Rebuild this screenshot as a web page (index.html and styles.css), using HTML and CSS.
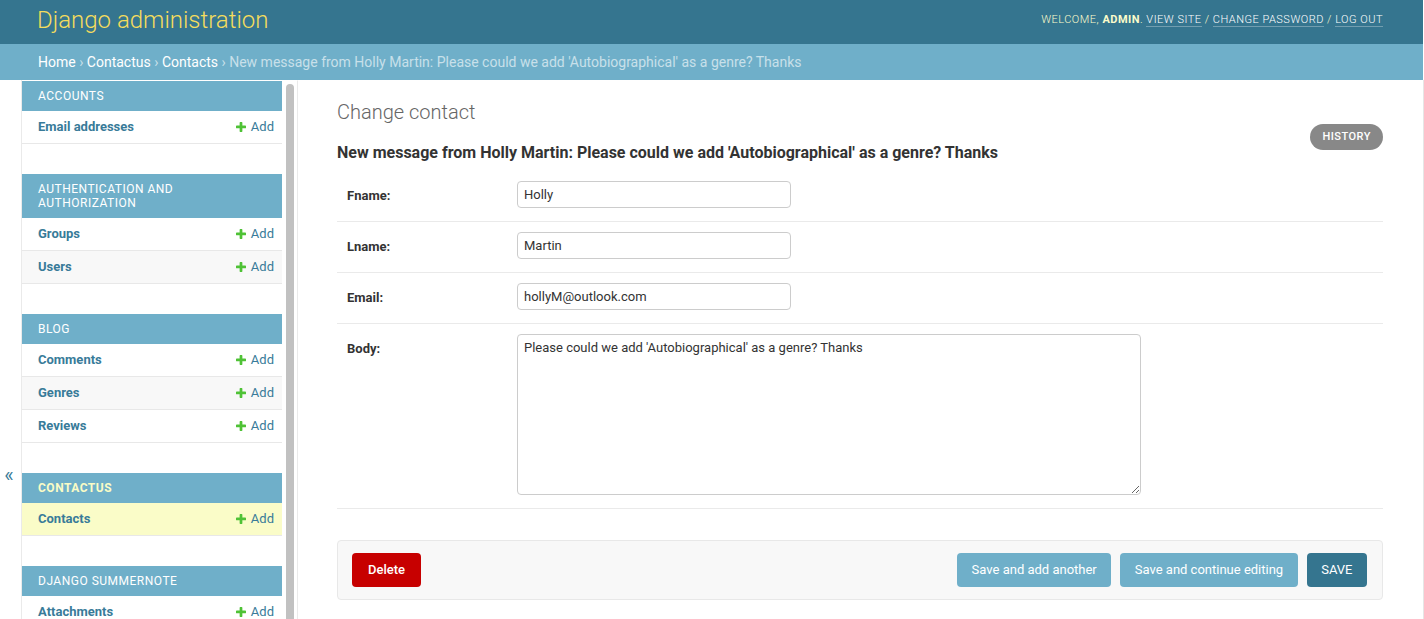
FILE: index.html
```html
<!DOCTYPE html>
<html lang="en">
<head>
<meta charset="utf-8">
<title>Change contact | Django site admin</title>
<link rel="stylesheet" href="styles.css">
</head>
<body>
<header class="header">
  <h1 class="site-name"><a href="#">Django administration</a></h1>
  <div class="user-tools">Welcome, <strong>admin</strong>. <a href="#">View site</a> / <a href="#">Change password</a> / <a href="#">Log out</a></div>
</header>
<nav class="breadcrumbs"><a href="#">Home</a> › <a href="#">Contactus</a> › <a href="#">Contacts</a> › New message from Holly Martin: Please could we add 'Autobiographical' as a genre? Thanks</nav>
<div class="main">
  <button class="toggle-nav" type="button">«</button>
  <nav class="nav-sidebar">
    <div class="sidebar-list">
      <div class="module">
        <div class="caption">Accounts</div>
        <div class="row"><a class="model" href="#">Email addresses</a><a class="addlink" href="#"><svg class="plus" viewBox="192 192 1408 1408" width="10" height="10"><path d="M1600 796v192q0 40-28 68t-68 28h-416v416q0 40-28 68t-68 28h-192q-40 0-68-28t-28-68v-416h-416q-40 0-68-28t-28-68v-192q0-40 28-68t68-28h416v-416q0-40 28-68t68-28h192q40 0 68 28t28 68v416h416q40 0 68 28t28 68z"/></svg>Add</a></div>
      </div>
      <div class="module">
        <div class="caption">Authentication and Authorization</div>
        <div class="row"><a class="model" href="#">Groups</a><a class="addlink" href="#"><svg class="plus" viewBox="192 192 1408 1408" width="10" height="10"><path d="M1600 796v192q0 40-28 68t-68 28h-416v416q0 40-28 68t-68 28h-192q-40 0-68-28t-28-68v-416h-416q-40 0-68-28t-28-68v-192q0-40 28-68t68-28h416v-416q0-40 28-68t68-28h192q40 0 68 28t28 68v416h416q40 0 68 28t28 68z"/></svg>Add</a></div>
        <div class="row alt"><a class="model" href="#">Users</a><a class="addlink" href="#"><svg class="plus" viewBox="192 192 1408 1408" width="10" height="10"><path d="M1600 796v192q0 40-28 68t-68 28h-416v416q0 40-28 68t-68 28h-192q-40 0-68-28t-28-68v-416h-416q-40 0-68-28t-28-68v-192q0-40 28-68t68-28h416v-416q0-40 28-68t68-28h192q40 0 68 28t28 68v416h416q40 0 68 28t28 68z"/></svg>Add</a></div>
      </div>
      <div class="module">
        <div class="caption">Blog</div>
        <div class="row"><a class="model" href="#">Comments</a><a class="addlink" href="#"><svg class="plus" viewBox="192 192 1408 1408" width="10" height="10"><path d="M1600 796v192q0 40-28 68t-68 28h-416v416q0 40-28 68t-68 28h-192q-40 0-68-28t-28-68v-416h-416q-40 0-68-28t-28-68v-192q0-40 28-68t68-28h416v-416q0-40 28-68t68-28h192q40 0 68 28t28 68v416h416q40 0 68 28t28 68z"/></svg>Add</a></div>
        <div class="row alt"><a class="model" href="#">Genres</a><a class="addlink" href="#"><svg class="plus" viewBox="192 192 1408 1408" width="10" height="10"><path d="M1600 796v192q0 40-28 68t-68 28h-416v416q0 40-28 68t-68 28h-192q-40 0-68-28t-28-68v-416h-416q-40 0-68-28t-28-68v-192q0-40 28-68t68-28h416v-416q0-40 28-68t68-28h192q40 0 68 28t28 68v416h416q40 0 68 28t28 68z"/></svg>Add</a></div>
        <div class="row"><a class="model" href="#">Reviews</a><a class="addlink" href="#"><svg class="plus" viewBox="192 192 1408 1408" width="10" height="10"><path d="M1600 796v192q0 40-28 68t-68 28h-416v416q0 40-28 68t-68 28h-192q-40 0-68-28t-28-68v-416h-416q-40 0-68-28t-28-68v-192q0-40 28-68t68-28h416v-416q0-40 28-68t68-28h192q40 0 68 28t28 68v416h416q40 0 68 28t28 68z"/></svg>Add</a></div>
      </div>
      <div class="module current-app">
        <div class="caption">Contactus</div>
        <div class="row current-model"><a class="model" href="#">Contacts</a><a class="addlink" href="#"><svg class="plus" viewBox="192 192 1408 1408" width="10" height="10"><path d="M1600 796v192q0 40-28 68t-68 28h-416v416q0 40-28 68t-68 28h-192q-40 0-68-28t-28-68v-416h-416q-40 0-68-28t-28-68v-192q0-40 28-68t68-28h416v-416q0-40 28-68t68-28h192q40 0 68 28t28 68v416h416q40 0 68 28t28 68z"/></svg>Add</a></div>
      </div>
      <div class="module">
        <div class="caption">Django Summernote</div>
        <div class="row"><a class="model" href="#">Attachments</a><a class="addlink" href="#"><svg class="plus" viewBox="192 192 1408 1408" width="10" height="10"><path d="M1600 796v192q0 40-28 68t-68 28h-416v416q0 40-28 68t-68 28h-192q-40 0-68-28t-28-68v-416h-416q-40 0-68-28t-28-68v-192q0-40 28-68t68-28h416v-416q0-40 28-68t68-28h192q40 0 68 28t28 68v416h416q40 0 68 28t28 68z"/></svg>Add</a></div>
      </div>
    </div>
    <div class="scroll-track"><div class="scroll-thumb"></div></div>
  </nav>
  <div class="content">
    <h1 class="title">Change contact</h1>
    <ul class="object-tools"><li><a href="#">History</a></li></ul>
    <h2 class="subtitle">New message from Holly Martin: Please could we add 'Autobiographical' as a genre? Thanks</h2>
    <form>
      <fieldset class="fields">
        <div class="form-row"><label for="f1">Fname:</label><input id="f1" class="field" type="text" value="Holly"></div>
        <div class="form-row"><label for="f2">Lname:</label><input id="f2" class="field" type="text" value="Martin"></div>
        <div class="form-row"><label for="f3">Email:</label><input id="f3" class="field" type="text" value="hollyM@outlook.com"></div>
        <div class="form-row"><label for="f4">Body:</label><textarea id="f4" class="field area">Please could we add 'Autobiographical' as a genre? Thanks</textarea></div>
      </fieldset>
      <div class="submit-row">
        <a class="deletelink" href="#">Delete</a>
        <button class="btn" type="button">Save and add another</button>
        <button class="btn" type="button">Save and continue editing</button>
        <button class="btn default" type="button">SAVE</button>
      </div>
    </form>
  </div>
</div>
</body>
</html>
```
FILE: styles.css
```css
html, body {
  margin: 0;
  height: 100%;
  overflow: hidden;
}
body {
  box-sizing: border-box;
  padding-right: 1px;
  background: #fff;
  color: #333;
  font-family: Roboto, "Liberation Sans", Arial, sans-serif;
  font-size: 14px;
}
a { text-decoration: none; }

.header {
  display: flex;
  justify-content: space-between;
  align-items: center;
  height: 44px;
  box-sizing: border-box;
  padding: 0 40px 4px 37px;
  background: #35758f;
}
.site-name {
  margin: 0;
  font-size: 24px;
  font-weight: 300;
  line-height: 24px;
}
.site-name a { color: #f5dd5d; }
.user-tools {
  font-size: 11px;
  font-weight: 300;
  letter-spacing: 0.5px;
  text-transform: uppercase;
  color: #fbfccb;
  line-height: 14px;
}
.user-tools strong { font-weight: 700; }
.user-tools a {
  color: #fff;
  border-bottom: 1px solid rgba(255, 255, 255, 0.3);
}

.breadcrumbs {
  display: block;
  height: 36px;
  box-sizing: border-box;
  padding: 10px 40px 10px 38px;
  line-height: 16px;
  background: #6fafc9;
  color: #c8e0ea;
  font-size: 14px;
}
.breadcrumbs a { color: #fff; }

.main {
  display: flex;
  align-items: flex-start;
  height: calc(100vh - 80px);
  overflow: hidden;
  margin-right: -1px;
  border-right: 1px solid #e6e6e6;
}
.toggle-nav {
  flex: 0 0 22px;
  box-sizing: border-box;
  width: 22px;
  height: 790px;
  margin: 0;
  padding: 0 3px 0 0;
  border: 0;
  border-right: 1px solid #eaeaea;
  background: #fff;
  color: #387b99;
  font-family: Roboto, "Liberation Sans", Arial, sans-serif;
  font-size: 20px;
  line-height: 24px;
  text-align: center;
  cursor: pointer;
}
.nav-sidebar {
  display: flex;
  flex: 0 0 276px;
  box-sizing: border-box;
  width: 276px;
  height: 100%;
  overflow: hidden;
  border-top: 1px solid transparent;
  border-right: 1px solid #eaeaea;
}
.sidebar-list {
  flex: 0 0 260px;
  width: 260px;
}
.scroll-track {
  flex: 0 0 15px;
  overflow: hidden;
  background: #fff;
}
.scroll-thumb {
  height: 600px;
  margin: 3px 3px 0 4px;
  border-radius: 4px;
  background: #c1c1c1;
}
.module { margin-bottom: 30px; }
.caption {
  padding: 8px 8px 8px 16px;
  background: #6fafc9;
  color: #fff;
  font-size: 12px;
  line-height: 14px;
  letter-spacing: 0.5px;
  text-transform: uppercase;
}
.current-app .caption { color: #fafcc6; font-weight: 700; }
.row {
  display: flex;
  justify-content: space-between;
  padding: 8px 8px 8px 16px;
  border-bottom: 1px solid #e8e8e8;
  font-size: 13px;
  line-height: 16px;
}
.row.alt { background: #f8f8f8; }
.row.current-model { background: #fafcc8; }
.model { color: #387b99; font-weight: 700; }
.addlink {
  display: flex;
  align-items: center;
  color: #387b99;
}
.plus {
  fill: #4fc236;
  margin-right: 5px;
}

.content {
  flex: 1;
  min-width: 0;
  padding: 20px 40px 20px 39px;
}
.title {
  margin: 0;
  font-size: 20px;
  font-weight: 300;
  line-height: 24px;
  color: #666;
}
.object-tools {
  float: right;
  list-style: none;
  margin: 0;
  padding: 0;
}
.object-tools a {
  display: block;
  height: 26px;
  padding: 0 12px;
  border-radius: 15px;
  background: #888;
  color: #fff;
  font-size: 11px;
  font-weight: 500;
  line-height: 26px;
  letter-spacing: 0.5px;
  text-transform: uppercase;
}
.subtitle {
  margin: 19px 0 8px;
  font-size: 16px;
  font-weight: 700;
  line-height: 20px;
  color: #333;
}
.fields {
  margin: 0 0 31px;
  padding: 0;
  border: 0;
  min-width: 0;
}
.form-row {
  display: flex;
  align-items: flex-start;
  padding: 10px 10px 13px;
  border-bottom: 1px solid #eaeaea;
  font-size: 13px;
}
.form-row label {
  flex: 0 0 170px;
  box-sizing: border-box;
  padding: 8px 10px 0 0;
  font-weight: 700;
  line-height: 14px;
  color: #333;
}
.field {
  display: block;
  box-sizing: border-box;
  width: 274px;
  height: 27px;
  margin: 0;
  padding: 5px 6px;
  border: 1px solid #cccccc;
  border-radius: 4px;
  background: #fff;
  color: #333;
  font-family: Roboto, "Liberation Sans", Arial, sans-serif;
  font-size: 13px;
  line-height: 15px;
}
.field.area {
  width: 624px;
  height: 161px;
  resize: both;
}

.submit-row {
  display: flex;
  align-items: center;
  gap: 9px;
  padding: 12px 15px 12px 14px;
  background: #f8f8f8;
  border: 1px solid #e8e8e8;
  border-radius: 4px;
}
.deletelink {
  margin-right: auto;
  height: 34px;
  padding: 0 16px;
  border-radius: 4px;
  background: #c70000;
  color: #fff;
  font-size: 13px;
  font-weight: 500;
  line-height: 34px;
}
.btn {
  height: 34px;
  margin: 0;
  padding: 0 14.5px;
  border: 0;
  border-radius: 4px;
  background: #6fafc9;
  color: #fff;
  font-family: Roboto, "Liberation Sans", Arial, sans-serif;
  font-size: 13px;
  line-height: 34px;
  cursor: pointer;
}
.btn.default { background: #35758f; }
```
